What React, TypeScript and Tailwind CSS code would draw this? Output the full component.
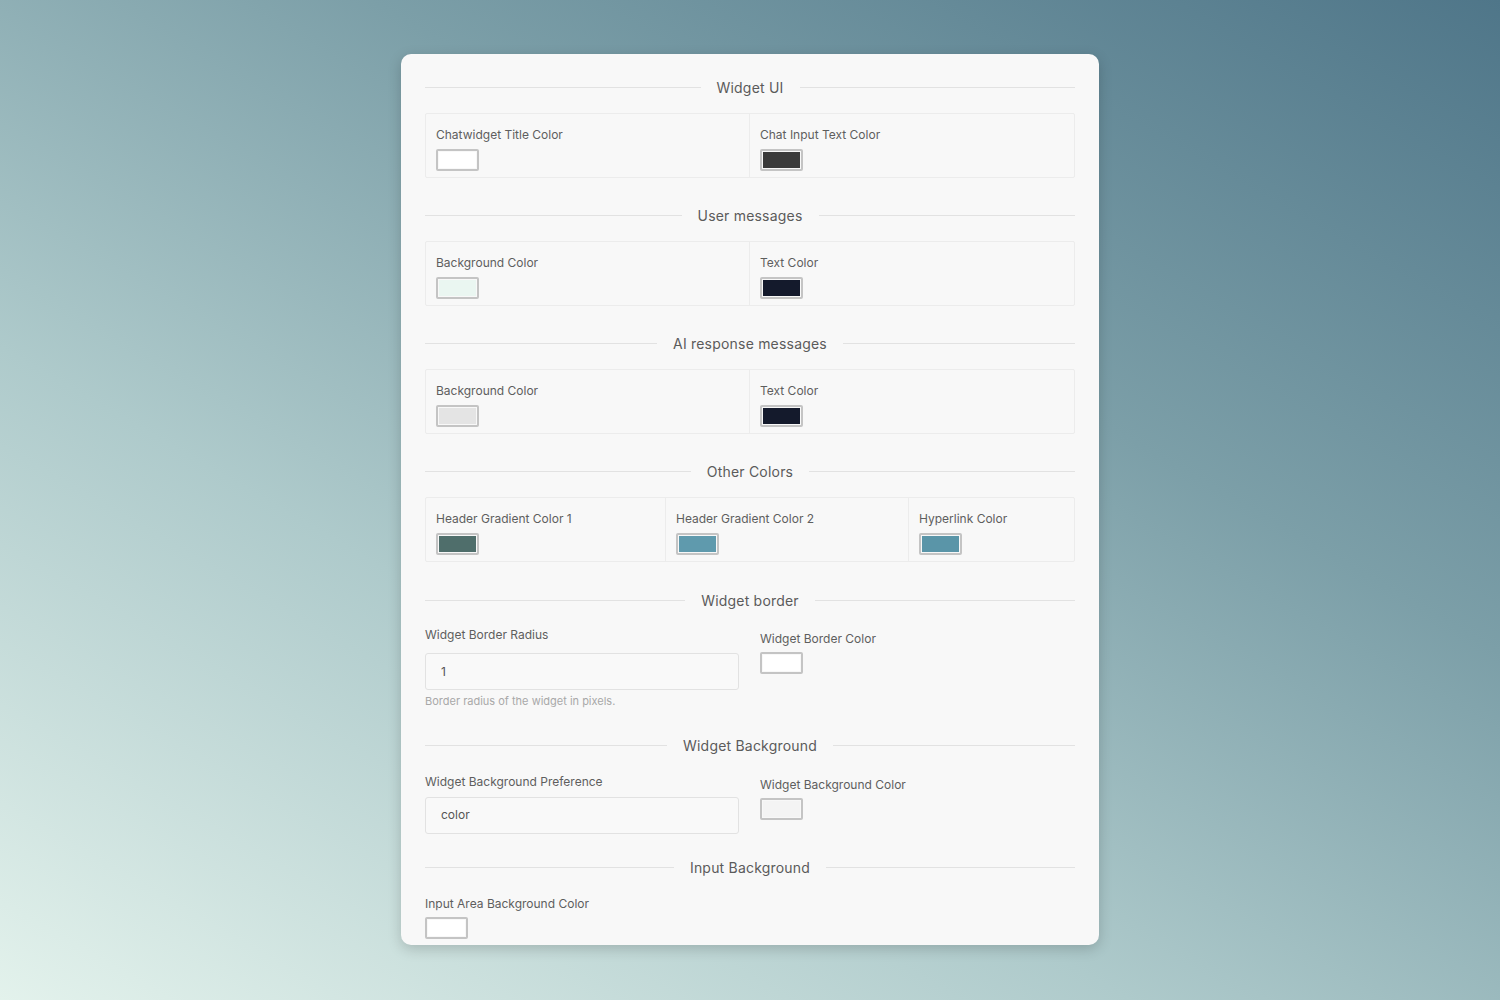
const font = { fontFamily: "Inter, 'Open Sans', sans-serif" };

function SectionTitle({ title }: { title: string }) {
  return (
    <div className="flex h-5 items-center gap-4">
      <div className="h-px flex-1 bg-[#e2e2e2]" />
      <span className="text-[14px] tracking-[0.2px] text-[#5b5b5b]">{title}</span>
      <div className="h-px flex-1 bg-[#e2e2e2]" />
    </div>
  );
}

function Swatch({ color }: { color: string }) {
  return (
    <div className="h-[22px] w-[43px] rounded-[2px] border-2 border-[#c4c4c4] p-px">
      <div className="h-full w-full" style={{ backgroundColor: color }} />
    </div>
  );
}

function ColorCell({ label, color, last }: { label: string; color: string; last?: boolean }) {
  return (
    <div className={`flex flex-col gap-[5px] px-[10px] pt-[12px] ${last ? "" : "border-r border-[#ececec]"}`}>
      <span className="text-[12px] text-[#5e5e5e]">{label}</span>
      <Swatch color={color} />
    </div>
  );
}

function Box({ cols, children }: { cols: string; children: React.ReactNode }) {
  return (
    <div className={`mt-[16px] grid h-[65px] rounded-[2px] border border-[#ececec] ${cols}`}>
      {children}
    </div>
  );
}

export default function App() {
  return (
    <div
      className="flex h-[1000px] w-full justify-center bg-[linear-gradient(30deg,#e3f2ec_0%,#aecacb_35%,#7c9fa8_65%,#4f7689_100%)] pt-[54px]"
      style={font}
    >
      <div className="h-[891px] w-[698px] rounded-[10px] bg-[#f8f8f8] px-[24px] pt-[23px] shadow-[0_4px_14px_rgba(0,0,0,0.18)]">
        <SectionTitle title="Widget UI" />
        <Box cols="grid-cols-2">
          <ColorCell label="Chatwidget Title Color" color="#ffffff" />
          <ColorCell label="Chat Input Text Color" color="#3a3a3a" last />
        </Box>

        <div className="mt-[27px]">
          <SectionTitle title="User messages" />
        </div>
        <Box cols="grid-cols-2">
          <ColorCell label="Background Color" color="#eaf6f1" />
          <ColorCell label="Text Color" color="#141a2c" last />
        </Box>

        <div className="mt-[27px]">
          <SectionTitle title="AI response messages" />
        </div>
        <Box cols="grid-cols-2">
          <ColorCell label="Background Color" color="#e4e4e4" />
          <ColorCell label="Text Color" color="#141a2c" last />
        </Box>

        <div className="mt-[27px]">
          <SectionTitle title="Other Colors" />
        </div>
        <Box cols="grid-cols-[240px_243px_1fr]">
          <ColorCell label="Header Gradient Color 1" color="#4f6e6b" />
          <ColorCell label="Header Gradient Color 2" color="#5f9aad" />
          <ColorCell label="Hyperlink Color" color="#5a95a8" last />
        </Box>

        <div className="mt-[28px]">
          <SectionTitle title="Widget border" />
        </div>
        <div className="mt-[16px] grid grid-cols-[314px_1fr] gap-[21px]">
          <div className="flex flex-col">
            <span className="text-[12px] text-[#5e5e5e]">Widget Border Radius</span>
            <div className="mt-[9px] flex h-[37px] items-center rounded-[3px] border border-[#e2e2e2] bg-[#f9f9f9] px-[15px] text-[12px] text-[#555]">
              1
            </div>
            <span className="mt-[3px] text-[11px] text-[#a8a8a8]">Border radius of the widget in pixels.</span>
          </div>
          <div className="flex flex-col gap-[4px] pt-[4px]">
            <span className="text-[12px] text-[#5e5e5e]">Widget Border Color</span>
            <Swatch color="#ffffff" />
          </div>
        </div>

        <div className="mt-[26px]">
          <SectionTitle title="Widget Background" />
        </div>
        <div className="mt-[17px] grid grid-cols-[314px_1fr] gap-[21px]">
          <div className="flex flex-col">
            <span className="text-[12px] text-[#5e5e5e]">Widget Background Preference</span>
            <div className="mt-[6px] flex h-[37px] items-center rounded-[3px] border border-[#e2e2e2] bg-[#f9f9f9] px-[15px] text-[12px] text-[#555]">
              color
            </div>
          </div>
          <div className="flex flex-col gap-[4px] pt-[3px]">
            <span className="text-[12px] text-[#5e5e5e]">Widget Background Color</span>
            <Swatch color="#f4f4f4" />
          </div>
        </div>

        <div className="mt-[24px]">
          <SectionTitle title="Input Background" />
        </div>
        <div className="mt-[17px] flex flex-col gap-[4px]">
          <span className="text-[12px] text-[#5e5e5e]">Input Area Background Color</span>
          <Swatch color="#ffffff" />
        </div>
      </div>
    </div>
  );
}
